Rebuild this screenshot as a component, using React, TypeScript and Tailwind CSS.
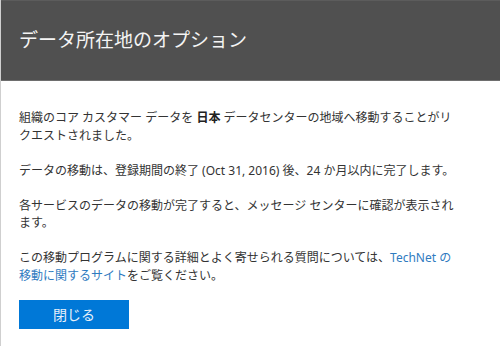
export default function App() {
  const font = { fontFamily: '"Noto Sans", "Noto Sans CJK JP", sans-serif' };
  return (
    <div className="w-[500px] h-[346px] bg-white border-l border-[#cfcfcf] overflow-hidden" style={font}>
      <div className="h-[81px] bg-[#505050] border-t border-[#5c5c5c] border-b border-b-[#6e6e6e] flex items-center pl-[18px]">
        <h1 className="text-[19px] leading-none text-[#f4f4f4] font-normal">データ所在地のオプション</h1>
      </div>
      <div className="pl-[18px] pr-[40px] pt-[28px] text-[12px] leading-[17.5px] text-[#333333]">
        <p>
          組織のコア カスタマー データを <b className="font-bold text-[#222]">日本</b> データセンターの地域へ移動することがリクエストされました。
        </p>
        <p className="mt-[17.5px]">データの移動は、登録期間の終了 (Oct 31, 2016) 後、24 か月以内に完了します。</p>
        <p className="mt-[17.5px]">
          各サービスのデータの移動が完了すると、メッセージ センターに確認が表示され
          <br />
          ます。
        </p>
        <p className="mt-[17.5px]">
          この移動プログラムに関する詳細とよく寄せられる質問については、<span className="text-[#2f7bbf]">TechNet の移動に関するサイト</span>をご覧ください。
        </p>
        <button className="mt-[16px] w-[110px] h-[29px] bg-[#0078d7] text-[#e6f0fa] text-[14px] flex items-center justify-center">
          閉じる
        </button>
      </div>
    </div>
  );
}
